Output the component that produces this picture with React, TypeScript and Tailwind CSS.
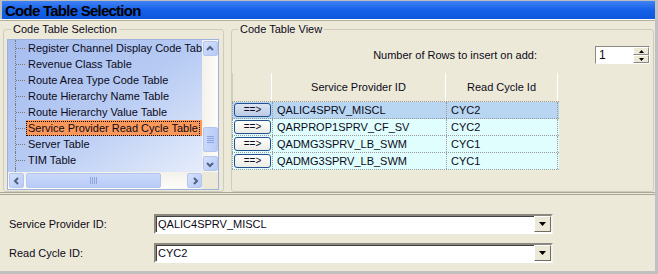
import React from 'react';

const treeItems = [
  'Register Channel Display Code Table',
  'Revenue Class Table',
  'Route Area Type Code Table',
  'Route Hierarchy Name Table',
  'Route Hierarchy Value Table',
  'Service Provider Read Cycle Table',
  'Server Table',
  'TIM Table',
  'Time of Use Code Table',
];

const rows = [
  { sp: 'QALIC4SPRV_MISCL', rc: 'CYC2', selected: true },
  { sp: 'QARPROP1SPRV_CF_SV', rc: 'CYC2', selected: false },
  { sp: 'QADMG3SPRV_LB_SWM', rc: 'CYC1', selected: false },
  { sp: 'QADMG3SPRV_LB_SWM', rc: 'CYC1', selected: false },
];

function Chevron({ dir }: { dir: 'up' | 'down' | 'left' | 'right' }) {
  const pts = {
    up: '2,6 5,3 8,6',
    down: '2,4 5,7 8,4',
    left: '6,2 3,5 6,8',
    right: '4,2 7,5 4,8',
  }[dir];
  return (
    <svg width="10" height="10" viewBox="0 0 10 10">
      <polyline points={pts} fill="none" stroke="#4D6185" strokeWidth="2" />
    </svg>
  );
}

function XpButton({ dir }: { dir: 'up' | 'down' | 'left' | 'right' }) {
  return (
    <div className="w-[15px] h-[15px] rounded-[2px] border border-[#B4C6EE] bg-gradient-to-br from-[#D5E1FC] to-[#B6CAF6] flex items-center justify-center">
      <Chevron dir={dir} />
    </div>
  );
}

function Grip({ vertical }: { vertical: boolean }) {
  return (
    <div className={vertical ? 'flex flex-col gap-[1px]' : 'flex gap-[1px]'}>
      {[0, 1, 2, 3].map((i) => (
        <div key={i} className={vertical ? 'w-[7px] h-[1px] bg-[#8EA6DC]' : 'w-[1px] h-[7px] bg-[#8EA6DC]'} />
      ))}
    </div>
  );
}

function TreeList() {
  return (
    <div className="w-[212px] h-[151px] border border-[#9DB1DA] flex flex-col">
      <div className="flex h-[132px]">
        <div className="flex-1 overflow-hidden bg-gradient-to-br from-[#A6BDEF] via-[#B6CAF3] to-[#E6EDFB]">
          {treeItems.map((t) => {
            const sel = t === 'Service Provider Read Cycle Table';
            return (
              <div key={t} className="h-[16px] flex items-stretch whitespace-nowrap">
                <span className="w-[7px] shrink-0" />
                <span className="w-[10px] shrink-0 border-l border-dotted border-[#7A7A7A] flex items-center">
                  <span className="w-full border-t border-dotted border-[#7A7A7A]" />
                </span>
                {sel ? (
                  <span className="flex-1 ml-[1px] bg-[#F9985A] flex items-center">
                    <span className="border border-dotted border-black px-[1px] leading-[13px]">{t}</span>
                  </span>
                ) : (
                  <span className="ml-[3px] flex items-center">{t}</span>
                )}
              </div>
            );
          })}
        </div>
        <div className="w-[16px] bg-gradient-to-r from-[#F3F1EA] to-[#FDFDFA] flex flex-col items-center pt-[1px]">
          <XpButton dir="up" />
          <div className="h-[71px]" />
          <div className="w-[15px] h-[25px] rounded-[2px] border border-[#B4C6EE] bg-gradient-to-r from-[#C9D8FC] to-[#B9CCF7] flex items-center justify-center">
            <Grip vertical />
          </div>
          <div className="h-[4px]" />
          <XpButton dir="down" />
        </div>
      </div>
      <div className="flex h-[17px]">
        <div className="flex-1 bg-gradient-to-b from-[#F3F1EA] to-[#FDFDFA] flex items-center pl-[1px]">
          <XpButton dir="left" />
          <div className="ml-[2px] w-[135px] h-[15px] rounded-[2px] border border-[#B4C6EE] bg-gradient-to-b from-[#C9D8FC] to-[#B9CCF7] flex items-center justify-center">
            <Grip vertical={false} />
          </div>
          <div className="flex-1" />
          <XpButton dir="right" />
        </div>
        <div className="w-[16px] bg-[#ECE9D8]" />
      </div>
    </div>
  );
}

function Spinner() {
  return (
    <div className="w-[55px] h-[18px] border border-t-[#8C8A80] border-l-[#8C8A80] border-b-white border-r-white bg-white flex">
      <div className="flex-1 pl-[3px] leading-[16px] text-[12px]">1</div>
      <div className="w-[16px] flex flex-col">
        {['up', 'down'].map((d) => (
          <div
            key={d}
            className="flex-1 bg-[#ECE9D8] border border-t-white border-l-white border-b-[#8C8A80] border-r-[#8C8A80] flex items-center justify-center"
          >
            <svg width="5" height="3" viewBox="0 0 5 3">
              <polygon points={d === 'up' ? '0,3 2.5,0 5,3' : '0,0 2.5,3 5,0'} fill="#000" />
            </svg>
          </div>
        ))}
      </div>
    </div>
  );
}

function DataGrid() {
  return (
    <div className="w-[327px] mt-[9px]">
      <div className="flex h-[28px] items-center text-center">
        <div className="w-[40px] h-full border-l border-[#D2CEBE] border-r border-r-white" />
        <div className="w-[174px] h-full border-r border-white flex items-center justify-center">Service Provider ID</div>
        <div className="w-[112px] h-full border-r border-white flex items-center justify-center">Read Cycle Id</div>
      </div>
      <div className="border-t border-dotted border-[#9A9A9A]">
        {rows.map((r, i) => (
          <div
            key={i}
            className={`flex h-[17px] border-b border-dotted border-[#9A9A9A] ${r.selected ? 'bg-[#B8D6F1]' : 'bg-[#E0FEFE]'}`}
          >
            <div className="w-[40px] flex items-center pl-[1px] border-l border-dotted border-[#9A9A9A]">
              <div
                className={`w-[37px] h-[14px] rounded-[3px] border border-[#23508F] flex items-center justify-center text-[10px] leading-none ${
                  r.selected ? 'bg-gradient-to-b from-[#DCE4F2] to-[#BCCBE4]' : 'bg-gradient-to-b from-white to-[#ECEBE4]'
                }`}
              >
                ==&gt;
              </div>
            </div>
            <div className="w-[174px] pl-[4px] flex items-center border-l border-dotted border-[#9A9A9A]">{r.sp}</div>
            <div className="w-[112px] pl-[4px] flex items-center border-l border-r border-dotted border-[#9A9A9A]">{r.rc}</div>
          </div>
        ))}
      </div>
    </div>
  );
}

function Combo({ value }: { value: string }) {
  return (
    <div className="w-[399px] h-[20px] border-2 border-t-[#8C8A80] border-l-[#8C8A80] border-b-white border-r-[#F4F2EA] shadow-[inset_1px_1px_0_#404040] bg-white flex">
      <div className="flex-1 pl-[2px] flex items-center text-[11px]">{value}</div>
      <div className="w-[17px] h-[16px] bg-[#ECE9D8] border border-t-white border-l-white border-b-[#6E6C64] border-r-[#6E6C64] flex items-center justify-center">
        <svg width="7" height="4" viewBox="0 0 7 4">
          <polygon points="0,0 3.5,4 7,0" fill="#000" />
        </svg>
      </div>
    </div>
  );
}

export default function App() {
  return (
    <div className="w-[658px] h-[274px] bg-[#ECE9D8] flex flex-col font-['Liberation_Sans',Arial,sans-serif] text-[11px] text-[#0C0A18] border-r-[3px] border-b-[3px] border-[#C0C0C0] overflow-hidden">
      <div className="bg-[#BEBEBE] pt-[1px] pl-[2px]">
        <div className="h-[18px] bg-gradient-to-b from-[#3F82F4] via-[#1460E9] to-[#0E57DD] flex items-center pl-[3px]">
          <span className="font-bold text-[15px] tracking-[-0.75px] text-black leading-none">Code Table Selection</span>
        </div>
      </div>
      <div className="h-[1px] bg-white" />
      <div className="h-[1px] bg-[#B3B0A2]" />

      <div className="flex h-[170px] mt-[1px]">
        <fieldset className="ml-[3px] w-[221px] h-[170px] border border-[#CFCCBC] rounded-[3px] pl-[3px] pt-[3px]">
          <legend className="ml-[4px] px-[2px] leading-[14px]">Code Table Selection</legend>
          <TreeList />
        </fieldset>
        <fieldset className="ml-[7px] w-[423px] h-[170px] border border-[#CFCCBC] rounded-[3px]">
          <legend className="ml-[6px] px-[2px] leading-[14px]">Code Table View</legend>
          <div className="mt-[10px] h-[18px] flex items-center justify-end pr-[3px]">
            <span className="mr-[58px]">Number of Rows to insert on add:</span>
            <Spinner />
          </div>
          <DataGrid />
        </fieldset>
      </div>

      <div className="h-[3px] border-t border-b border-[#ACA899]" />

      <div className="flex-1 pt-[19px] pl-[9px] flex flex-col gap-[9px]">
        <div className="flex items-center h-[20px]">
          <span className="w-[145px]">Service Provider ID:</span>
          <Combo value="QALIC4SPRV_MISCL" />
        </div>
        <div className="flex items-center h-[20px]">
          <span className="w-[145px]">Read Cycle ID:</span>
          <Combo value="CYC2" />
        </div>
      </div>
    </div>
  );
}
